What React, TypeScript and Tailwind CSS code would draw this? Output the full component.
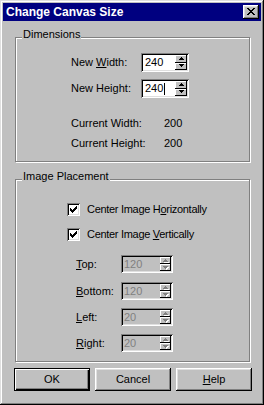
import React from "react";

const raised =
  "shadow-[inset_-1px_-1px_#000,inset_1px_1px_#fff,inset_-2px_-2px_#808080,inset_2px_2px_#dfdfdf]";
const sunken =
  "shadow-[inset_1px_1px_#808080,inset_-1px_-1px_#fff,inset_2px_2px_#000,inset_-2px_-2px_#dfdfdf]";

function Arrow({ up, disabled }: { up?: boolean; disabled?: boolean }) {
  const c = disabled ? "#808080" : "#000";
  const rows = up
    ? [
        [2, 0, 1],
        [1, 1, 3],
        [0, 2, 5],
      ]
    : [
        [0, 0, 5],
        [1, 1, 3],
        [2, 2, 1],
      ];
  return (
    <svg width="6" height="4" viewBox="0 0 6 4" shapeRendering="crispEdges" className="block">
      {disabled &&
        rows.map(([x, y, w], i) => (
          <rect key={"s" + i} x={x + 1} y={y + 1} width={w} height={1} fill="#fff" />
        ))}
      {rows.map(([x, y, w], i) => (
        <rect key={i} x={x} y={y} width={w} height={1} fill={c} />
      ))}
    </svg>
  );
}

function SpinField({
  value,
  disabled,
  caret,
  small,
}: {
  value: string;
  disabled?: boolean;
  caret?: boolean;
  small?: boolean;
}) {
  return (
    <div
      className={`flex p-[2px] ${sunken} ${
        disabled ? "bg-[#c0c0c0] w-[52px] h-[18px]" : "bg-white w-[48px] h-[19px]"
      }`}
    >
      <div
        className={`flex-1 flex items-center text-[11px] leading-[13px] ${
          disabled ? "text-[#808080] pl-[1px]" : "text-black pl-[2px]"
        }`}
      >
        <span>{value}</span>
        {caret && <span className="inline-block w-px h-[12px] bg-black ml-[1px]" />}
      </div>
      <div className={`flex flex-col ${small ? "w-[11px]" : "w-[12px]"}`}>
        <div className="flex-1 bg-[#c0c0c0] shadow-[inset_-1px_-1px_#000,inset_1px_1px_#fff] flex items-center justify-center pl-[1px]">
          <Arrow up disabled={disabled} />
        </div>
        <div className="flex-1 bg-[#c0c0c0] shadow-[inset_-1px_-1px_#000,inset_1px_1px_#fff] flex items-center justify-center pl-[1px]">
          <Arrow disabled={disabled} />
        </div>
      </div>
    </div>
  );
}

function Check() {
  return (
    <div className={`w-[13px] h-[13px] bg-white ${sunken} flex items-center justify-center`}>
      <svg width="7" height="7" viewBox="0 0 7 7" shapeRendering="crispEdges" className="block">
        <rect x="6" y="0" width="1" height="1" fill="#000" />
        <rect x="5" y="1" width="2" height="1" fill="#000" />
        <rect x="0" y="2" width="1" height="1" fill="#000" />
        <rect x="4" y="2" width="3" height="1" fill="#000" />
        <rect x="0" y="3" width="2" height="1" fill="#000" />
        <rect x="3" y="3" width="3" height="1" fill="#000" />
        <rect x="0" y="4" width="5" height="1" fill="#000" />
        <rect x="1" y="5" width="3" height="1" fill="#000" />
        <rect x="2" y="6" width="1" height="1" fill="#000" />
      </svg>
    </div>
  );
}

function CloseX() {
  const rows: [number, number, number][] = [
    [0, 0, 2],
    [6, 0, 2],
    [1, 1, 2],
    [5, 1, 2],
    [2, 2, 4],
    [3, 3, 2],
    [2, 4, 4],
    [1, 5, 2],
    [5, 5, 2],
    [0, 6, 2],
    [6, 6, 2],
  ];
  return (
    <svg width="8" height="7" viewBox="0 0 8 7" shapeRendering="crispEdges" className="block">
      {rows.map(([x, y, w], i) => (
        <rect key={i} x={x} y={y} width={w} height={1} fill="#000" />
      ))}
    </svg>
  );
}

function Group({
  title,
  className,
  children,
}: {
  title: string;
  className: string;
  children: React.ReactNode;
}) {
  return (
    <div
      className={`relative ml-[12px] w-[235px] border border-[#808080] shadow-[inset_1px_1px_#fff,1px_1px_#fff] ${className}`}
    >
      <span className="absolute -top-[10px] left-[6px] bg-[#c0c0c0] px-[1px] text-[11px] leading-[13px] text-black">
        {title}
      </span>
      {children}
    </div>
  );
}

export default function App() {
  return (
    <div
      className={`w-[264px] h-[405px] bg-[#c0c0c0] p-[3px] flex flex-col font-['Liberation_Sans',Arial,sans-serif] text-black shadow-[inset_-1px_-1px_#000,inset_1px_1px_#dfdfdf,inset_-2px_-2px_#808080,inset_2px_2px_#fff]`}
    >
      {/* Title bar */}
      <div className="h-[18px] bg-[#000080] flex items-center justify-between pl-[3px] pr-[2px]">
        <span className="text-white font-bold text-[12px] leading-[14px]">Change Canvas Size</span>
        <div className={`w-[16px] h-[14px] bg-[#c0c0c0] ${raised} flex items-center justify-center pb-[1px]`}>
          <CloseX />
        </div>
      </div>

      {/* Dimensions */}
      <Group title="Dimensions" className="mt-[16px] h-[125px] pt-[15px] pl-[55px]">
        <div className="flex items-center h-[19px]">
          <span className="w-[70px] text-[11px] leading-[13px]">
            New <u>W</u>idth:
          </span>
          <SpinField value="240" />
        </div>
        <div className="flex items-center h-[19px] mt-[7px]">
          <span className="w-[70px] text-[11px] leading-[13px]">
            New Hei<u>g</u>ht:
          </span>
          <SpinField value="240" caret />
        </div>
        <div className="flex mt-[19px] text-[11px] leading-[13px]">
          <span className="w-[93px]">Current Width:</span>
          <span>200</span>
        </div>
        <div className="flex mt-[7px] text-[11px] leading-[13px]">
          <span className="w-[93px]">Current Height:</span>
          <span>200</span>
        </div>
      </Group>

      {/* Image Placement */}
      <Group title="Image Placement" className="mt-[17px] h-[183px] pt-[23px]">
        <div className="flex items-center h-[13px] pl-[51px]">
          <Check />
          <span className="ml-[7px] text-[11px] leading-[13px] tracking-[-0.3px]">
            Center Image H<u>o</u>rizontally
          </span>
        </div>
        <div className="flex items-center h-[13px] mt-[12px] pl-[51px]">
          <Check />
          <span className="ml-[7px] text-[11px] leading-[13px] tracking-[-0.3px]">
            Center Image <u>V</u>ertically
          </span>
        </div>
        <div className="flex items-center h-[18px] mt-[14px] pl-[60px]">
          <span className="w-[45px] text-[11px] leading-[13px]">
            <u>T</u>op:
          </span>
          <SpinField value="120" disabled small />
        </div>
        <div className="flex items-center h-[18px] mt-[9px] pl-[60px]">
          <span className="w-[45px] text-[11px] leading-[13px]">
            <u>B</u>ottom:
          </span>
          <SpinField value="120" disabled small />
        </div>
        <div className="flex items-center h-[18px] mt-[8px] pl-[60px]">
          <span className="w-[45px] text-[11px] leading-[13px]">
            <u>L</u>eft:
          </span>
          <SpinField value="20" disabled small />
        </div>
        <div className="flex items-center h-[18px] mt-[8px] pl-[60px]">
          <span className="w-[45px] text-[11px] leading-[13px]">
            <u>R</u>ight:
          </span>
          <SpinField value="20" disabled small />
        </div>
      </Group>

      {/* Buttons */}
      <div className="flex gap-[5px] mt-[6px] ml-[11px]">
        <button className="w-[76px] h-[23px] bg-[#c0c0c0] border border-black shadow-[inset_1px_1px_#fff,inset_-1px_-1px_#000,inset_-2px_-2px_#808080] text-[11px] leading-[13px] text-black">
          OK
        </button>
        <button className={`w-[76px] h-[23px] bg-[#c0c0c0] ${raised} text-[11px] leading-[13px] text-black`}>
          Cancel
        </button>
        <button className={`w-[76px] h-[23px] bg-[#c0c0c0] ${raised} text-[11px] leading-[13px] text-black`}>
          <u>H</u>elp
        </button>
      </div>
    </div>
  );
}
